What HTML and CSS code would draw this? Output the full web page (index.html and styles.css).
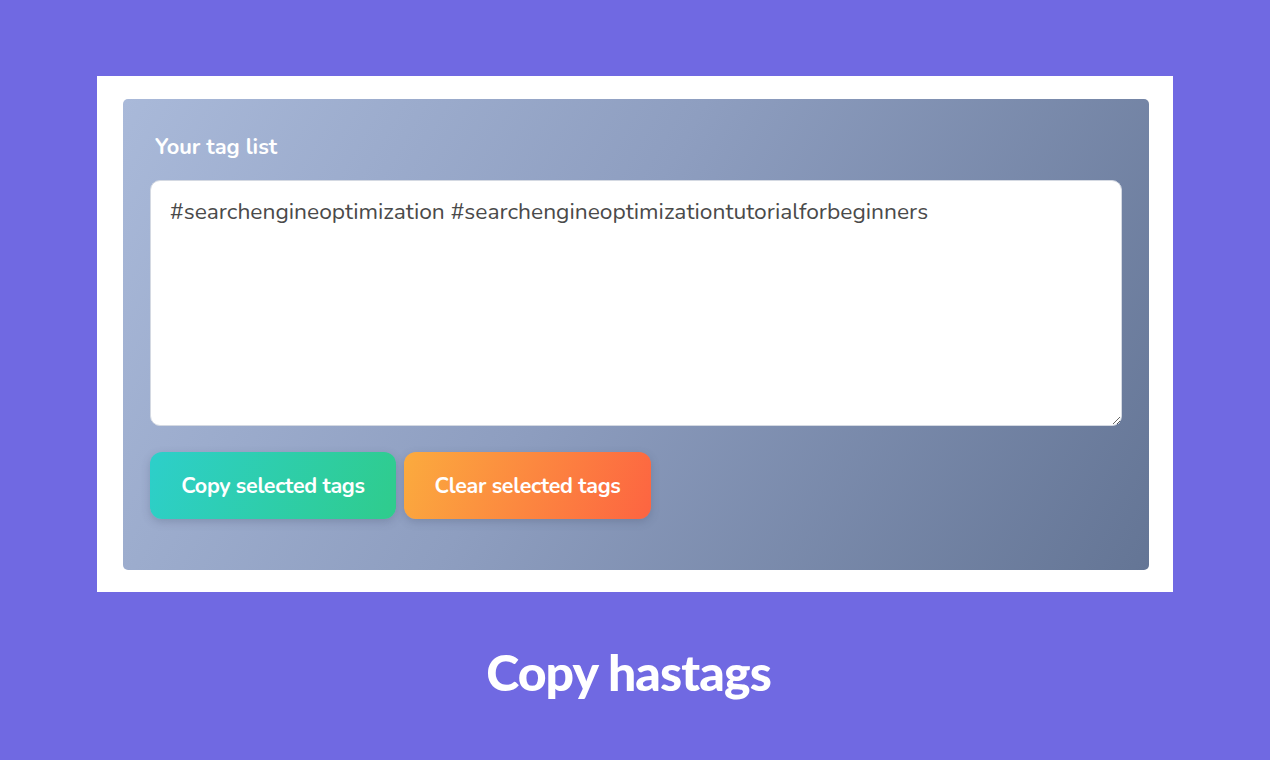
FILE: index.html
```html
<!DOCTYPE html>
<html lang="en">

<head>
    <meta charset="UTF-8">
    <meta name="viewport" content="width=device-width, initial-scale=1.0">
    <title>Copy hastags</title>
    <link rel="stylesheet" href="styles.css">
</head>

<body>
    <div class="frame">
        <div class="panel">
            <label class="tag-label" for="tagList">Your tag list</label>
            <textarea id="tagList" class="tag-list">#searchengineoptimization #searchengineoptimizationtutorialforbeginners</textarea>
            <div class="actions">
                <button type="button" class="btn btn-copy">Copy selected tags</button>
                <button type="button" class="btn btn-clear">Clear selected tags</button>
            </div>
        </div>
    </div>

    <h1 class="caption">Copy hastags</h1>
</body>

</html>
```

FILE: styles.css
```css
body {
    margin: 0;
    padding-top: 76px;
    background-color: #7069e2;
    font-family: "Nunito", "Lato", "Open Sans", sans-serif;
}

.frame {
    width: 1026px;
    margin: 0 auto;
    padding: 23px 24px 22px 26px;
    background-color: #ffffff;
}

.panel {
    display: flex;
    flex-direction: column;
    padding: 33px 27px 51px;
    border-radius: 5px;
    background: linear-gradient(120deg, #a9b9d9 0%, #8e9ec0 45%, #647595 100%);
}

.tag-label {
    margin-left: 5px;
    margin-bottom: 18px;
    color: #ffffff;
    font-size: 21.8px;
    font-weight: 700;
    line-height: 30px;
}

.tag-list {
    height: 246px;
    padding: 17px 19px;
    box-sizing: border-box;
    border: 1px solid #d4d9e2;
    border-radius: 10px;
    background-color: #ffffff;
    color: #4a4a4a;
    font-family: "Nunito", "Lato", "Open Sans", sans-serif;
    font-size: 22.8px;
    line-height: 28px;
    resize: vertical;
    outline: none;
}

.actions {
    display: flex;
    gap: 8px;
    margin-top: 26px;
}

.btn {
    width: 247px;
    height: 67px;
    border: none;
    border-radius: 12px;
    color: #ffffff;
    font-family: "Nunito", "Lato", "Open Sans", sans-serif;
    font-size: 21.5px;
    font-weight: 700;
    letter-spacing: -0.3px;
    cursor: pointer;
    box-shadow: 0 3px 8px rgba(60, 70, 100, 0.25);
}

.btn-copy {
    width: 246px;
    background: linear-gradient(110deg, #2dcfca 0%, #2fcc8c 100%);
}

.btn-clear {
    background: linear-gradient(110deg, #fbab3e 0%, #fd6441 100%);
}

.caption {
    margin: 50px 0 0;
    padding-right: 13px;
    text-align: center;
    color: #ffffff;
    font-family: "Lato", sans-serif;
    font-size: 50px;
    font-weight: 900;
    letter-spacing: -0.9px;
}
```
